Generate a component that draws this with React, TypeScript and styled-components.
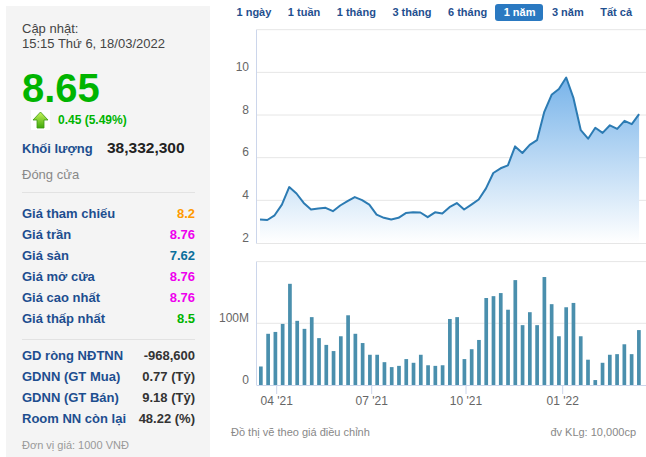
import React from 'react'
import styled, { createGlobalStyle } from 'styled-components'

const GlobalStyle = createGlobalStyle`
  body {
    margin: 0;
    background: #fff;
    font-family: "Liberation Sans", Arial, sans-serif;
  }
`

const Page = styled.div`
  display: flex;
  width: 646px;
  height: 457px;
  overflow: hidden;
`

const Sidebar = styled.div`
  width: 204px;
  height: 451px;
  box-sizing: border-box;
  margin: 6px 0 0 6px;
  padding: 15px 15px 0 16px;
  background: #f4f4f4;
`

const Updated = styled.div`
  font-size: 13px;
  line-height: 15px;
  color: #444;
`

const BigPrice = styled.div`
  margin-top: 17px;
  font-size: 40px;
  line-height: 40px;
  font-weight: bold;
  color: #00b400;
`

const ChangeRow = styled.div`
  display: flex;
  align-items: center;
  height: 20px;
  margin-top: 2px;
  padding-left: 9px;
`

const ChangeText = styled.span`
  margin-left: 8px;
  font-size: 12px;
  font-weight: bold;
  color: #00b400;
`

const VolumeRow = styled.div`
  display: flex;
  align-items: center;
  height: 20px;
  margin-top: 8px;
`

const VolumeLabel = styled.span`
  width: 85px;
  font-size: 13px;
  font-weight: bold;
  color: #1d4e8f;
`

const VolumeValue = styled.span`
  font-size: 15.5px;
  font-weight: bold;
  color: #222;
`

const Closed = styled.div`
  margin-top: 9px;
  font-size: 13px;
  line-height: 16px;
  color: #888;
`

const Divider = styled.div`
  margin-top: ${(p: { $gap: number }) => p.$gap}px;
  border-top: 1px solid #e2e2e2;
`

const Group = styled.div<{ $gap: number; $row: number }>`
  margin-top: ${(p) => p.$gap}px;
  display: grid;
  grid-auto-rows: ${(p) => p.$row}px;
`

const InfoRow = styled.div`
  display: flex;
  justify-content: space-between;
  align-items: center;
  font-size: 13px;
  font-weight: bold;
`

const InfoLabel = styled.span`
  color: #1d4e8f;
`

const InfoValue = styled.span<{ $color: string }>`
  color: ${(p) => p.$color};
`

const Note = styled.div`
  margin-top: 9px;
  font-size: 11px;
  line-height: 14px;
  color: #999;
`

const Main = styled.div`
  flex: 1;
  display: flex;
  flex-direction: column;
`

const Tabs = styled.div`
  display: flex;
  padding: 4px 0 0 18px;
`

const Tab = styled.div<{ $active?: boolean }>`
  padding: 0 8px 0 8.5px;
  height: 17px;
  line-height: 17px;
  font-size: 11px;
  font-weight: bold;
  border-radius: 3px;
  color: ${(p) => (p.$active ? '#fff' : '#1f4f8f')};
  background: ${(p) => (p.$active ? '#2a79c1' : 'transparent')};
  cursor: pointer;
`

const ChartSvg = styled.svg`
  display: block;
  font-family: "Liberation Sans", Arial, sans-serif;
`

const Footer = styled.div`
  display: flex;
  justify-content: space-between;
  padding: 10px 10px 0 21px;
  font-size: 11px;
  line-height: 14px;
  color: #888;
`

const PRICES = [
  3.1, 3.08, 3.3, 3.8, 4.62, 4.32, 3.88, 3.57, 3.62, 3.65, 3.49, 3.76, 3.96, 4.15,
  4.01, 3.8, 3.33, 3.18, 3.1, 3.18, 3.4, 3.44, 3.43, 3.21, 3.44, 3.38, 3.68, 3.87,
  3.57, 3.8, 4.04, 4.56, 5.28, 5.5, 5.64, 6.53, 6.22, 6.6, 6.82, 8.15, 8.95, 9.22,
  9.76, 8.79, 7.29, 6.89, 7.4, 7.16, 7.52, 7.35, 7.73, 7.57, 8.04,
]

const VOLUMES = [
  30, 83, 86, 99, 164, 104, 91, 110, 76, 65, 55, 79, 113, 83, 68, 49, 49, 37, 29,
  31, 42, 36, 49, 32, 31, 32, 107, 110, 42, 58, 73, 141, 144, 149, 122, 170, 97,
  118, 97, 175, 131, 79, 126, 133, 79, 41, 8, 36, 49, 50, 66, 50, 89,
]

const TABS = ['1 ngày', '1 tuần', '1 tháng', '3 tháng', '6 tháng', '1 năm', '3 năm', 'Tất cả']

const PRICE_ROWS = [
  { label: 'Giá tham chiếu', value: '8.2', color: '#ff9a00' },
  { label: 'Giá trần', value: '8.76', color: '#ee00ee' },
  { label: 'Giá sàn', value: '7.62', color: '#0a6f9c' },
  { label: 'Giá mở cửa', value: '8.76', color: '#ee00ee' },
  { label: 'Giá cao nhất', value: '8.76', color: '#ee00ee' },
  { label: 'Giá thấp nhất', value: '8.5', color: '#00b400' },
]

const FOREIGN_ROWS = [
  { label: 'GD ròng NĐTNN', value: '-968,600' },
  { label: 'GDNN (GT Mua)', value: '0.77 (Tỷ)' },
  { label: 'GDNN (GT Bán)', value: '9.18 (Tỷ)' },
  { label: 'Room NN còn lại', value: '48.22 (%)' },
]

const AXIS = '#ccd6eb'
const GRID = '#e6e6e6'
const LABEL = '#666'
const LEFT = 46.5
const WIDTH = 436

const UpArrow = () => (
  <svg width="19" height="20" viewBox="0 0 19 20">
    <rect width="19" height="20" fill="#fff" />
    <defs>
      <linearGradient id="arrowFill" x1="0" y1="0" x2="0" y2="1">
        <stop offset="0" stopColor="#c8f55a" />
        <stop offset="1" stopColor="#3fa80c" />
      </linearGradient>
    </defs>
    <path
      d="M9.5 2 L17 10 L13 10 L13 18 L6 18 L6 10 L2 10 Z"
      fill="url(#arrowFill)"
      stroke="#3d9a12"
      strokeWidth="0.8"
      strokeLinejoin="round"
    />
  </svg>
)

const PriceChart = () => {
  const y = (p: number) => 218 - (p - 2) * 21.33
  const x = (i: number) => 50 + i * 7.29
  const line = PRICES.map((p, i) => `${i ? 'L' : 'M'}${x(i).toFixed(1)} ${y(p).toFixed(1)}`).join(' ')
  const area = `${line} L${x(PRICES.length - 1)} 218 L${x(0)} 218 Z`
  return (
    <ChartSvg width={WIDTH} height={225} style={{ marginTop: 4 }}>
      <defs>
        <linearGradient id="priceFill" gradientUnits="userSpaceOnUse" x1="0" y1="40" x2="0" y2="218">
          <stop offset="0" stopColor="#6eaee8" />
          <stop offset="1" stopColor="#ffffff" />
        </linearGradient>
      </defs>
      {[12, 10, 8, 6, 4].map((v) => (
        <line key={v} x1={LEFT} x2={WIDTH} y1={y(v)} y2={y(v)} stroke={GRID} />
      ))}
      <line x1={LEFT} x2={WIDTH} y1={218.5} y2={218.5} stroke={GRID} />
      <line x1={LEFT} x2={LEFT} y1={y(12)} y2={218.5} stroke={AXIS} />
      {[10, 8, 6, 4, 2].map((v) => (
        <text key={v} x={39} y={y(v) - 1.5} textAnchor="end" fontSize="12" fill={LABEL}>
          {v}
        </text>
      ))}
      <path d={area} fill="url(#priceFill)" />
      <path d={line} fill="none" stroke="#2c7bb3" strokeWidth="2" strokeLinejoin="round" />
    </ChartSvg>
  )
}

const VolumeChart = () => {
  const base = 135
  const k = 0.617
  const ticks = [
    { x: 66.7, label: "04 '21" },
    { x: 161.7, label: "07 '21" },
    { x: 256, label: "10 '21" },
    { x: 352.7, label: "01 '22" },
  ]
  return (
    <ChartSvg width={WIDTH} height={165}>
      <line x1={LEFT} x2={WIDTH} y1={base - 200 * k} y2={base - 200 * k} stroke={GRID} />
      <line x1={LEFT} x2={WIDTH} y1={base - 100 * k} y2={base - 100 * k} stroke={GRID} />
      <line x1={LEFT} x2={LEFT} y1={base - 200 * k} y2={base} stroke={AXIS} />
      <text x={39} y={base - 100 * k - 1.5} textAnchor="end" fontSize="12" fill={LABEL}>
        100M
      </text>
      <text x={39} y={base - 1} textAnchor="end" fontSize="12" fill={LABEL}>
        0
      </text>
      {VOLUMES.map((v, i) => (
        <rect key={i} x={49 + i * 7.27} y={base - v * k} width={3.7} height={v * k} fill="#4a8fad" />
      ))}
      <line x1={LEFT} x2={WIDTH} y1={base + 0.5} y2={base + 0.5} stroke={AXIS} />
      {ticks.map((t) => (
        <g key={t.label}>
          <line x1={t.x} x2={t.x} y1={base} y2={base + 9} stroke={AXIS} />
          <text x={t.x} y={base + 19.5} textAnchor="middle" fontSize="12" fill={LABEL}>
            {t.label}
          </text>
        </g>
      ))}
    </ChartSvg>
  )
}

const App = () => {
  return (
    <>
      <GlobalStyle />
      <Page>
        <Sidebar>
          <Updated>
            Cập nhật:
            <br />
            15:15 Thứ 6, 18/03/2022
          </Updated>
          <BigPrice>8.65</BigPrice>
          <ChangeRow>
            <UpArrow />
            <ChangeText>0.45 (5.49%)</ChangeText>
          </ChangeRow>
          <VolumeRow>
            <VolumeLabel>Khối lượng</VolumeLabel>
            <VolumeValue>38,332,300</VolumeValue>
          </VolumeRow>
          <Closed>Đóng cửa</Closed>
          <Divider $gap={9} />
          <Group $gap={10} $row={21}>
            {PRICE_ROWS.map((r) => (
              <InfoRow key={r.label}>
                <InfoLabel>{r.label}</InfoLabel>
                <InfoValue $color={r.color}>{r.value}</InfoValue>
              </InfoRow>
            ))}
          </Group>
          <Divider $gap={10} />
          <Group $gap={5} $row={21}>
            {FOREIGN_ROWS.map((r) => (
              <InfoRow key={r.label}>
                <InfoLabel>{r.label}</InfoLabel>
                <InfoValue $color="#333">{r.value}</InfoValue>
              </InfoRow>
            ))}
          </Group>
          <Note>Đơn vị giá: 1000 VNĐ</Note>
        </Sidebar>
        <Main>
          <Tabs>
            {TABS.map((t) => (
              <Tab key={t} $active={t === '1 năm'}>
                {t}
              </Tab>
            ))}
          </Tabs>
          <PriceChart />
          <VolumeChart />
          <Footer>
            <span>Đồ thị vẽ theo giá điều chỉnh</span>
            <span>đv KLg: 10,000cp</span>
          </Footer>
        </Main>
      </Page>
    </>
  )
}

export default App
